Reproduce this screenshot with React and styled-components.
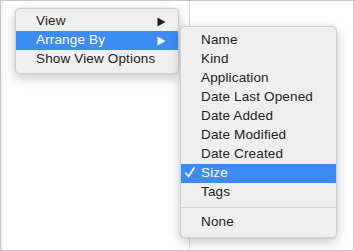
import React from 'react'
import styled, { createGlobalStyle } from 'styled-components'

const GlobalStyle = createGlobalStyle`
    html, body {
        margin: 0;
        padding: 0;
        background: #fff;
    }
    body {
        font-family: "Liberation Sans", Arial, sans-serif;
        -webkit-font-smoothing: antialiased;
    }
`

const viewMenu = [
    { label: 'View', sub: true },
    { label: 'Arrange By', sub: true, active: true },
    { label: 'Show View Options' },
]

const arrangeMenu = [
    { label: 'Name' },
    { label: 'Kind' },
    { label: 'Application' },
    { label: 'Date Last Opened' },
    { label: 'Date Added' },
    { label: 'Date Modified' },
    { label: 'Date Created' },
    { label: 'Size', active: true, checked: true },
    { label: 'Tags' },
    { separator: true },
    { label: 'None' },
]

const Arrow = ({ color }) => (
    <svg width="9" height="10" viewBox="0 0 9 10">
        <path d="M0.5 0.5 L8.5 5 L0.5 9.5 Z" fill={color} />
    </svg>
)

const Check = ({ color }) => (
    <svg width="10" height="11" viewBox="0 0 10 11">
        <path d="M1 6.2 L3.6 9.6 L9 1" fill="none" stroke={color} strokeWidth="1.6" strokeLinecap="round" strokeLinejoin="round" />
    </svg>
)

const MenuList = ({ items, ...rest }) => (
    <Menu {...rest}>
        {items.map((item, i) =>
            item.separator ? (
                <Separator key={i} />
            ) : (
                <Item key={i} $active={item.active}>
                    {item.checked && (
                        <CheckBox>
                            <Check color={item.active ? '#fff' : '#222'} />
                        </CheckBox>
                    )}
                    <Label>{item.label}</Label>
                    {item.sub && (
                        <SubArrow>
                            <Arrow color={item.active ? '#fff' : '#1e1e1e'} />
                        </SubArrow>
                    )}
                </Item>
            )
        )}
    </Menu>
)

const App = () => {
    return (
        <>
            <GlobalStyle />
            <Window>
                <Column />
                <Column $wide />
                <MenuList items={viewMenu} $left={14} $top={7} $width={164} $pad="3px 0 4px" />
                <MenuList items={arrangeMenu} $left={179} $top={25} $width={157} $pad="4px 0 5px" />
            </Window>
        </>
    )
}

const Window = styled.div`
    position: relative;
    box-sizing: border-box;
    width: 354px;
    height: 251px;
    border: 1px solid #c6c6c6;
    background: #fff;
    display: flex;
    overflow: hidden;
`

const Column = styled.div`
    box-sizing: border-box;
    width: ${p => (p.$wide ? 'auto' : '189px')};
    flex: ${p => (p.$wide ? '1' : 'none')};
    border-left: ${p => (p.$wide ? 'none' : '2px solid #f3f3f3')};
    border-right: ${p => (p.$wide ? 'none' : '1px solid #dedede')};
`

const Menu = styled.div`
    position: absolute;
    left: ${p => p.$left}px;
    top: ${p => p.$top}px;
    width: ${p => p.$width}px;
    box-sizing: border-box;
    padding: ${p => p.$pad};
    background: #efefef;
    border: 1px solid rgba(0, 0, 0, 0.13);
    border-radius: 5px;
    box-shadow: 0 4px 12px rgba(0, 0, 0, 0.22), 0 0 2px rgba(0, 0, 0, 0.08);
`

const Item = styled.div`
    position: relative;
    display: flex;
    align-items: center;
    height: 19px;
    padding: 0 12px 0 20px;
    font-size: 13.5px;
    letter-spacing: 0.15px;
    color: ${p => (p.$active ? '#fff' : '#232323')};
    background: ${p => (p.$active ? '#3d8cf4' : 'transparent')};
    white-space: nowrap;
`

const Label = styled.span`
    position: relative;
    top: -1px;
`

const CheckBox = styled.span`
    position: absolute;
    left: 4px;
    top: 3px;
    display: flex;
`

const SubArrow = styled.span`
    margin-left: auto;
    display: flex;
`

const Separator = styled.div`
    height: 1px;
    margin: 5px 0 5px;
    background: #d6d6d6;
`

export default App
